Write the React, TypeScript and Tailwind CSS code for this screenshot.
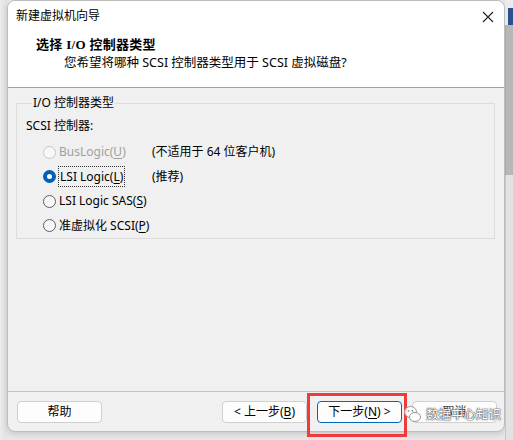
import React from "react";

const font = '"Noto Sans", "Noto Sans CJK SC", sans-serif';

function Radio({ state }: { state: "disabled" | "checked" | "off" }) {
  if (state === "checked") {
    return (
      <span className="w-[13px] h-[13px] rounded-full bg-[#005fb8] flex items-center justify-center shrink-0">
        <span className="w-[5px] h-[5px] rounded-full bg-white" />
      </span>
    );
  }
  return (
    <span
      className={
        "w-[13px] h-[13px] rounded-full border bg-[#f7f7f7] shrink-0 " +
        (state === "disabled" ? "border-[#c6c6c6]" : "border-[#5c5c5c]")
      }
    />
  );
}

function U({ children }: { children: React.ReactNode }) {
  return <span className="underline underline-offset-2">{children}</span>;
}

function Btn({ children, primary }: { children: React.ReactNode; primary?: boolean }) {
  return (
    <div
      className={
        "w-[85px] h-[22px] rounded-[4px] bg-[#fdfdfd] flex items-center justify-center text-[12px] text-black " +
        (primary ? "border border-[#0067c0]" : "border border-[#d0d0d0]")
      }
    >
      {children}
    </div>
  );
}

export default function App() {
  return (
    <div
      className="relative w-[513px] h-[440px] bg-[#e8e8e8] flex overflow-hidden"
      style={{ fontFamily: font }}
    >
      <div className="w-[7px] shrink-0 bg-gradient-to-r from-[#ececec] to-[#e2e2e2]" />
      <div className="w-[498px] h-[432px] shrink-0 rounded-[8px] border border-[#bdbdbd] bg-[#f0f0f0] flex flex-col overflow-hidden shadow-[0_2px_6px_rgba(0,0,0,0.15)]">
        {/* header */}
        <div className="h-[87px] bg-white border-b border-[#a0a0a0] flex flex-col shrink-0">
          <div className="h-[29px] flex items-center justify-between pl-[8px] pr-[8px]">
            <span className="text-[12px] text-black leading-none mt-[1px]">新建虚拟机向导</span>
            <svg width="12" height="12" viewBox="0 0 12 12" className="mr-[2px] mt-[2px]">
              <path d="M1 1 L11 11 M11 1 L1 11" stroke="#222" strokeWidth="1.1" fill="none" />
            </svg>
          </div>
          <div
            className="pl-[28px] mt-[6px] text-[13px] font-bold text-black leading-[18px] tracking-[0.3px]"
            style={{ fontFamily: '"Liberation Serif", "Noto Sans CJK SC", serif' }}
          >
            选择 I/O 控制器类型
          </div>
          <div className="pl-[56px] text-[12.5px] text-black leading-[18px]">
            您希望将哪种 SCSI 控制器类型用于 SCSI 虚拟磁盘?
          </div>
        </div>

        {/* content */}
        <div className="flex-1 px-[8px] pt-[7px]">
          <fieldset className="border border-[#dcdcdc] h-[144px] mr-[1px] pl-[9px]">
            <legend className="ml-[6px] px-[1px] text-[12px] leading-[16px] text-black">I/O 控制器类型</legend>
            <div className="mt-[7px] text-[12px] leading-[16px] text-black">SCSI 控制器:</div>
            <div className="mt-[6px] pl-[17px] flex flex-col text-[12px] text-black">
              <div className="h-[24.5px] flex items-center">
                <Radio state="disabled" />
                <span className="ml-[3px] w-[93px] text-[#a0a0a0]">
                  BusLogic(<U>U</U>)
                </span>
                <span>(不适用于 64 位客户机)</span>
              </div>
              <div className="h-[24.5px] flex items-center">
                <Radio state="checked" />
                <span className="ml-[2px] w-[94px]">
                  <span className="border border-dotted border-[#333] px-[1px] py-[1px]">
                    LSI Logic(<U>L</U>)
                  </span>
                </span>
                <span>(推荐)</span>
              </div>
              <div className="h-[24.5px] flex items-center">
                <Radio state="off" />
                <span className="ml-[3px]">
                  LSI Logic SAS(<U>S</U>)
                </span>
              </div>
              <div className="h-[24.5px] flex items-center">
                <Radio state="off" />
                <span className="ml-[3px]">
                  准虚拟化 SCSI(<U>P</U>)
                </span>
              </div>
            </div>
          </fieldset>
        </div>

        {/* footer */}
        <div className="h-[40px] shrink-0 border-t border-[#c4c4c4] pt-[9px] pl-[9px] pr-[7px] flex">
          <Btn>帮助</Btn>
          <div className="flex-1" />
          <div className="flex gap-[10px]">
            <Btn>
              &lt; 上一步(<U>B</U>)
            </Btn>
            <Btn primary>
              下一步(<U>N</U>) &gt;
            </Btn>
            <Btn>
              <span className="text-[#444]">取消</span>
            </Btn>
          </div>
        </div>
      </div>
      <div className="w-[8px] shrink-0 flex flex-col">
        <div className="h-[8px] bg-[#ececec]" />
        <div className="h-[17px] bg-[#c9c9c9] flex">
          <div className="w-[3px] bg-[#e9e9e9]" />
          <div className="flex-1 bg-[#2d4f91]" />
        </div>
        <div className="h-[150px] bg-[#b7b7b7] border-l border-[#a9a9a9]" />
        <div className="flex-1 bg-[#e2e2e2] border-l border-[#c6c6c6]" />
      </div>

      {/* red highlight */}
      <div className="absolute left-[307px] top-[393px] w-[100px] h-[44px] border-[3px] border-[#ef3b3b]" />

      {/* watermark */}
      <div className="absolute left-[403px] top-[404px] flex items-center gap-[4px] pointer-events-none">
        <svg width="19" height="20" viewBox="0 0 19 20">
          <ellipse cx="7.5" cy="8" rx="6" ry="5.5" fill="rgba(255,255,255,0.85)" stroke="#9a9a9a" strokeWidth="1" />
          <ellipse cx="12" cy="13" rx="5.5" ry="4.5" fill="rgba(255,255,255,0.9)" stroke="#9a9a9a" strokeWidth="1" />
          <circle cx="5.5" cy="7" r="0.9" fill="#9a9a9a" />
          <circle cx="9.5" cy="7" r="0.9" fill="#9a9a9a" />
        </svg>
        <span
          className="text-[12.5px] text-white leading-none [text-shadow:0_0_1px_#444,0_0_1px_#444,0_0_2px_#666]"
          style={{ fontFamily: '"Noto Sans CJK SC", sans-serif' }}
        >
          数据中心知识
        </span>
      </div>
    </div>
  );
}
